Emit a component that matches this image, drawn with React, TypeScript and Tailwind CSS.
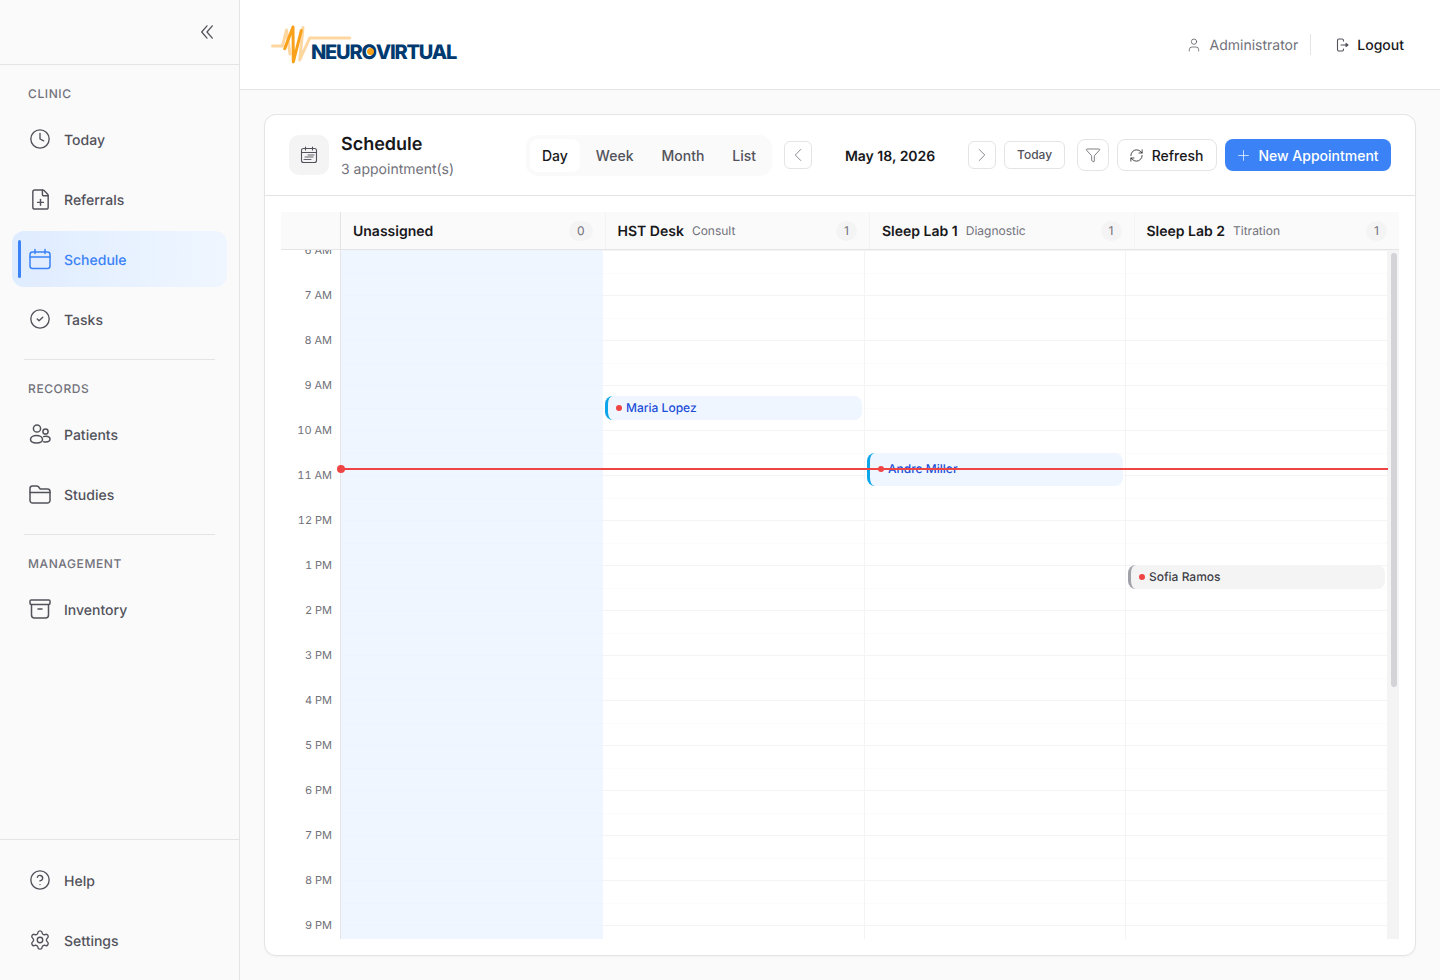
import React from "react";
import {
  ChevronLeft,
  ChevronRight,
  CircleCheck,
  CircleHelp,
  Clock,
  FilePlus,
  Funnel,
  Plus,
  RefreshCw,
  Settings,
  User,
} from "lucide-react";

const iconProps = {
  width: 24,
  height: 24,
  viewBox: "0 0 24 24",
  fill: "none",
  stroke: "currentColor",
  strokeWidth: 1.5,
  strokeLinecap: "round" as const,
  strokeLinejoin: "round" as const,
};

const CalendarIcon = () => (
  <svg {...iconProps}>
    <rect x="2" y="5" width="20" height="16.5" rx="2.5" />
    <path d="M2 10h20M7 2.5v4M17 2.5v4" />
  </svg>
);

const PatientsIcon = () => (
  <svg {...iconProps}>
    <circle cx="9" cy="6.5" r="3.6" />
    <circle cx="17.5" cy="9.5" r="2.6" />
    <path d="M8.5 21c-3.6 0-6-1.2-6-3.4 0-2.4 2.7-4.1 6-4.1s6 1.7 6 4.1c0 2.2-2.4 3.4-6 3.4Z" />
    <path d="M15.6 14.6c.6-.2 1.3-.3 2-.3 2.4 0 4.4 1.2 4.4 3 0 1.7-1.8 2.7-4.4 2.7-.7 0-1.3-.1-1.9-.2" />
  </svg>
);

const FolderIcon = () => (
  <svg {...iconProps}>
    <path d="M2 6.5A2.5 2.5 0 0 1 4.5 4h4.2c.7 0 1.3.3 1.8.8L12.2 7H19.5a2.5 2.5 0 0 1 2.5 2.5v9a2.5 2.5 0 0 1-2.5 2.5h-15A2.5 2.5 0 0 1 2 18.5Z" />
    <path d="M2 10.5h20" />
  </svg>
);

const InventoryIcon = () => (
  <svg {...iconProps}>
    <rect x="2" y="3" width="20" height="4.5" rx="1.2" />
    <path d="M3.5 7.5V18a3 3 0 0 0 3 3h11a3 3 0 0 0 3-3V7.5" />
    <path d="M10 12h4" />
  </svg>
);

const CollapseIcon = () => (
  <svg width="12" height="14" viewBox="0 0 12 14" fill="none" stroke="currentColor" strokeWidth="1.25" strokeLinecap="round" strokeLinejoin="round" className="text-[#52525b]">
    <path d="M6 .8 .7 7 6 13.2M11.3 .8 6 7l5.3 6.2" />
  </svg>
);

const LogoutIcon = () => (
  <svg width="16" height="16" viewBox="0 0 16 16" fill="none" stroke="currentColor" strokeWidth="1.1" strokeLinecap="round" strokeLinejoin="round" className="text-[#52525b]">
    <path d="M9.5 4V3.5A1.5 1.5 0 0 0 8 2H5A1.5 1.5 0 0 0 3.5 3.5v9A1.5 1.5 0 0 0 5 14h3a1.5 1.5 0 0 0 1.5-1.5V12" />
    <path d="M7 8h5" />
    <path d="M12 6.5 14 8l-2 1.5Z" fill="currentColor" />
  </svg>
);

const ScheduleIcon = () => (
  <svg width="20" height="20" viewBox="0 0 20 20" fill="none" stroke="currentColor" strokeWidth="1.1" strokeLinecap="round">
    <rect x="2.5" y="3.5" width="15" height="14" rx="2" />
    <path d="M2.5 7.5h15M6.5 2v3M13.5 2v3" />
    <path d="M9 10h6M6 12h8M5 14.5h7" strokeWidth="0.9" />
  </svg>
);

const Logo = () => (
  <div className="relative h-[40px] w-[190px]">
    <svg className="absolute left-[1px] top-0" width="90" height="40" viewBox="0 0 90 40" fill="none" strokeLinejoin="round" strokeLinecap="round">
      <path d="M1.5 21h10l4-16 3.5 24" stroke="#fdd6a0" strokeWidth="3" />
      <path d="M32 2.5 28.7 35 38.700 13h40" stroke="#fdd6a0" strokeWidth="3" />
      <path d="M13.700 23.700 22 2l.3 35 8-31.500" stroke="#f9a11b" strokeWidth="3" />
    </svg>
    <div className="absolute left-[41px] top-[14px] flex items-center text-[20px] font-extrabold leading-[26px] tracking-[-1.2px] text-[#003a70]">
      <span>NEUR</span>
      <span className="relative">
        O
        <span className="absolute left-[5px] top-[9.5px] h-[7px] w-[7px] rounded-full bg-[#f9a11b]" />
      </span>
      <span>VIRTUAL</span>
    </div>
  </div>
);

const NavItem = ({
  icon,
  label,
  active,
}: {
  icon: React.ReactNode;
  label: string;
  active?: boolean;
}) => (
  <a
    className={
      active
        ? "relative flex h-14 items-center gap-3 rounded-xl bg-gradient-to-r from-[#dfecff] to-[#eff6ff] pl-4 text-sm font-medium text-[#3b82f6]"
        : "flex h-14 items-center gap-3 rounded-xl pl-4 text-sm font-medium text-[#52525b]"
    }
  >
    {active && (
      <span className="absolute left-[6px] top-[9px] h-[38px] w-[3px] rounded-full bg-[#3b82f6]" />
    )}
    <span className="flex h-6 w-6 shrink-0 items-center justify-center">{icon}</span>
    <span className="pt-[4px]">{label}</span>
  </a>
);

const SectionLabel = ({ children }: { children: string }) => (
  <div className="pl-4 text-xs font-medium leading-4 tracking-[0.6px] text-[#71717a]">{children}</div>
);

const Sidebar = () => (
  <aside className="flex h-full w-[240px] shrink-0 flex-col border-r border-[#e4e4e7] bg-[#fafafa]">
    <div className="flex h-[65px] shrink-0 items-center justify-end border-b border-[#e4e4e7] pr-[26px]">
      <CollapseIcon />
    </div>
    <nav className="flex min-h-0 flex-1 flex-col px-3 pt-[21px]">
      <SectionLabel>CLINIC</SectionLabel>
      <div className="mt-[9px] flex flex-col gap-1">
        <NavItem icon={<Clock size={22} strokeWidth={1.5} />} label="Today" />
        <NavItem icon={<FilePlus size={23} strokeWidth={1.5} />} label="Referrals" />
        <NavItem icon={<CalendarIcon />} label="Schedule" active />
        <NavItem icon={<CircleCheck size={22} strokeWidth={1.5} />} label="Tasks" />
      </div>
      <div className="mx-3 mb-[21px] mt-3 border-t border-[#e4e4e7]" />
      <SectionLabel>RECORDS</SectionLabel>
      <div className="mt-[9px] flex flex-col gap-1">
        <NavItem icon={<PatientsIcon />} label="Patients" />
        <NavItem icon={<FolderIcon />} label="Studies" />
      </div>
      <div className="mx-3 mb-[21px] mt-3 border-t border-[#e4e4e7]" />
      <SectionLabel>MANAGEMENT</SectionLabel>
      <div className="mt-[9px] flex flex-col gap-1">
        <NavItem icon={<InventoryIcon />} label="Inventory" />
      </div>
    </nav>
    <div className="flex shrink-0 flex-col gap-1 border-t border-[#e4e4e7] px-3 py-3">
      <NavItem icon={<CircleHelp size={22} strokeWidth={1.5} />} label="Help" />
      <NavItem icon={<Settings size={22} strokeWidth={1.5} />} label="Settings" />
    </div>
  </aside>
);

const Toolbar = () => (
  <div className="flex h-[81px] shrink-0 items-center border-b border-[#e4e4e7] pl-6 pr-6">
    <div className="flex h-10 w-10 items-center justify-center rounded-[10px] bg-[#f4f4f5] text-[#52525b]">
      <ScheduleIcon />
    </div>
    <div className="ml-3 w-[185px]">
      <div className="translate-y-[1px] text-lg font-semibold leading-6 text-[#18181b]">Schedule</div>
      <div className="mt-[2px] translate-y-[2px] text-sm leading-5 text-[#71717a]">3 appointment(s)</div>
    </div>
    <div className="flex h-[41px] items-center gap-1 rounded-xl bg-[#fafafa] p-1">
      <button className="h-[33px] rounded-lg bg-white px-3 pt-[2px] text-sm font-medium text-[#18181b]">Day</button>
      <button className="h-[33px] rounded-lg px-3 pt-[2px] text-sm font-medium text-[#52525b]">Week</button>
      <button className="h-[33px] rounded-lg px-3 pt-[2px] text-sm font-medium text-[#52525b]">Month</button>
      <button className="h-[33px] rounded-lg px-3 pt-[2px] text-sm font-medium text-[#52525b]">List</button>
    </div>
    <button className="ml-3 flex h-7 w-7 items-center justify-center rounded-md border border-[#e4e4e7] bg-white text-[#71717a]">
      <ChevronLeft size={22} strokeWidth={0.9} />
    </button>
    <div className="w-[156px] pt-[4px] text-center text-sm font-semibold text-[#18181b]">May 18, 2026</div>
    <button className="flex h-7 w-7 items-center justify-center rounded-md border border-[#e4e4e7] bg-white text-[#71717a]">
      <ChevronRight size={22} strokeWidth={0.9} />
    </button>
    <button className="ml-2 h-7 w-[61px] rounded-md border border-[#e4e4e7] bg-white text-xs font-medium text-[#52525b]">Today</button>
    <button className="ml-3 flex h-8 w-8 items-center justify-center rounded-lg border border-[#e4e4e7] bg-white text-[#3f3f46]">
      <Funnel size={16} strokeWidth={1} />
    </button>
    <button className="ml-2 flex h-8 w-[100px] items-center justify-center gap-2 rounded-lg border border-[#e4e4e7] bg-white pr-[2px] text-sm font-medium text-[#18181b]">
      <RefreshCw size={15} strokeWidth={1.25} />
      <span className="pt-[2px]">Refresh</span>
    </button>
    <button className="ml-2 flex h-8 w-[166px] items-center justify-center gap-[6px] rounded-lg bg-[#3b82f6] pr-[2px] text-sm font-medium text-white">
      <Plus size={17} strokeWidth={1} />
      <span className="pt-[2px]">New Appointment</span>
    </button>
  </div>
);

const columns = [
  { name: "Unassigned", sub: "", count: 0 },
  { name: "HST Desk", sub: "Consult", count: 1 },
  { name: "Sleep Lab 1", sub: "Diagnostic", count: 1 },
  { name: "Sleep Lab 2", sub: "Titration", count: 1 },
];

const hours = ["6 AM", "7 AM", "8 AM", "9 AM", "10 AM", "11 AM", "12 PM", "1 PM", "2 PM", "3 PM", "4 PM", "5 PM", "6 PM", "7 PM", "8 PM", "9 PM"];

const Cells = ({ tint }: { tint?: boolean }) => (
  <>
    {hours.map((h) => (
      <div key={h} className={tint ? "h-[45px] border-t border-[#eef4fc]" : "h-[45px] border-t border-[#f4f4f5]"}>
        <div className={tint ? "h-[23px] border-b border-[#eef4fd]" : "h-[23px] border-b border-[#fbfbfb]"} />
      </div>
    ))}
  </>
);

const Appointment = ({
  name,
  grey,
  className,
}: {
  name: string;
  grey?: boolean;
  className: string;
}) => (
  <div
    className={
      (grey
        ? "border-[#a1a1aa] bg-[#f4f4f5] text-[#3f3f46] "
        : "border-[#0ea5e9] bg-[#eff6ff] text-[#1d4ed8] ") +
      "absolute flex items-center gap-[4px] rounded-lg border-l-[3px] pl-2 text-xs font-medium " +
      className
    }
  >
    <span className="h-[6px] w-[6px] rounded-full bg-[#ef4444]" />
    {name}
  </div>
);

const Calendar = () => (
  <div className="flex min-h-0 flex-1 flex-col p-4">
    <div className="flex h-[38px] shrink-0 border-b border-[#e4e4e7] bg-[#fafafa]">
      <div className="w-[60px] shrink-0 border-r border-[#e4e4e7]" />
      <div className="grid flex-1 grid-cols-4">
        {columns.map((c, i) => (
          <div
            key={c.name}
            className={
              i < 3
                ? "flex items-center border-r border-[#f4f4f5] pl-3 pr-3"
                : "flex items-center pl-3 pr-3"
            }
          >
            <span className="translate-y-[1px] text-sm font-semibold text-[#18181b]">{c.name}</span>
            {c.sub && <span className="ml-2 text-xs text-[#71717a]">{c.sub}</span>}
            <span className="ml-auto flex h-5 min-w-5 items-center justify-center rounded-full bg-[#f4f4f5] px-2 text-xs text-[#71717a]">
              {c.count}
            </span>
          </div>
        ))}
      </div>
    </div>
    <div className="relative flex min-h-0 flex-1 overflow-hidden">
      <div className="w-[60px] shrink-0 border-r border-[#e4e4e7]">
        {hours.map((h) => (
          <div key={h} className="h-[45px] pr-2 text-right text-[11px] leading-[14px] text-[#71717a] tabular-nums">
            <span className="block -translate-y-[7px]">{h}</span>
          </div>
        ))}
      </div>
      <div className="relative grid flex-1 grid-cols-[262px_262px_261px_261px]">
        <div className="bg-[#eff6ff]">
          <Cells tint />
        </div>
        <div className="border-r border-[#f4f4f5]">
          <Cells />
        </div>
        <div className="border-r border-[#f4f4f5]">
          <Cells />
        </div>
        <div>
          <Cells />
        </div>
        <Appointment name="Maria Lopez" className="left-[264px] top-[146px] h-[24px] w-[257px]" />
        <Appointment name="Andre Miller" className="left-[526px] top-[203px] h-[33px] w-[256px] pb-[1px]" />
        <Appointment name="Sofia Ramos" grey className="left-[787px] top-[315px] h-[24px] w-[257px]" />
      </div>
      <div className="relative w-3 shrink-0 bg-[#f4f4f5]">
        <div className="absolute left-[4px] top-[3px] h-[434px] w-[6px] rounded-full bg-[#d4d4d8]" />
      </div>
      <div className="absolute left-[60px] right-[11px] top-[218px] h-[2px] bg-[#ef4444]">
        <div className="absolute -left-1 -top-[3px] h-2 w-2 rounded-full bg-[#ef4444]" />
      </div>
    </div>
  </div>
);

export default function App() {
  return (
    <div className="flex h-[980px] w-[1440px] overflow-hidden bg-[#fafafa] font-['Inter',sans-serif] [text-rendering:geometricPrecision]">
      <Sidebar />
      <main className="flex min-w-0 flex-1 flex-col">
        <header className="flex h-[90px] shrink-0 items-center justify-between border-b border-[#e4e4e7] bg-white pl-[30px] pr-9">
          <Logo />
          <div className="flex items-center text-sm">
            <User size={16} strokeWidth={1.1} className="text-[#52525b]" />
            <span className="ml-2 translate-y-[1px] text-[#71717a]">Administrator</span>
            <span className="ml-3 h-[21px] border-l border-[#e4e4e7]" />
            <span className="ml-[23px]">
              <LogoutIcon />
            </span>
            <span className="ml-[7px] translate-y-[1px] text-sm font-medium text-[#18181b]">Logout</span>
          </div>
        </header>
        <div className="flex min-h-0 flex-1 p-6">
          <section className="flex min-w-0 flex-1 flex-col rounded-xl border border-[#e4e4e7] bg-white shadow-[0_1px_2px_rgba(0,0,0,0.04)]">
            <Toolbar />
            <Calendar />
          </section>
        </div>
      </main>
    </div>
  );
}
